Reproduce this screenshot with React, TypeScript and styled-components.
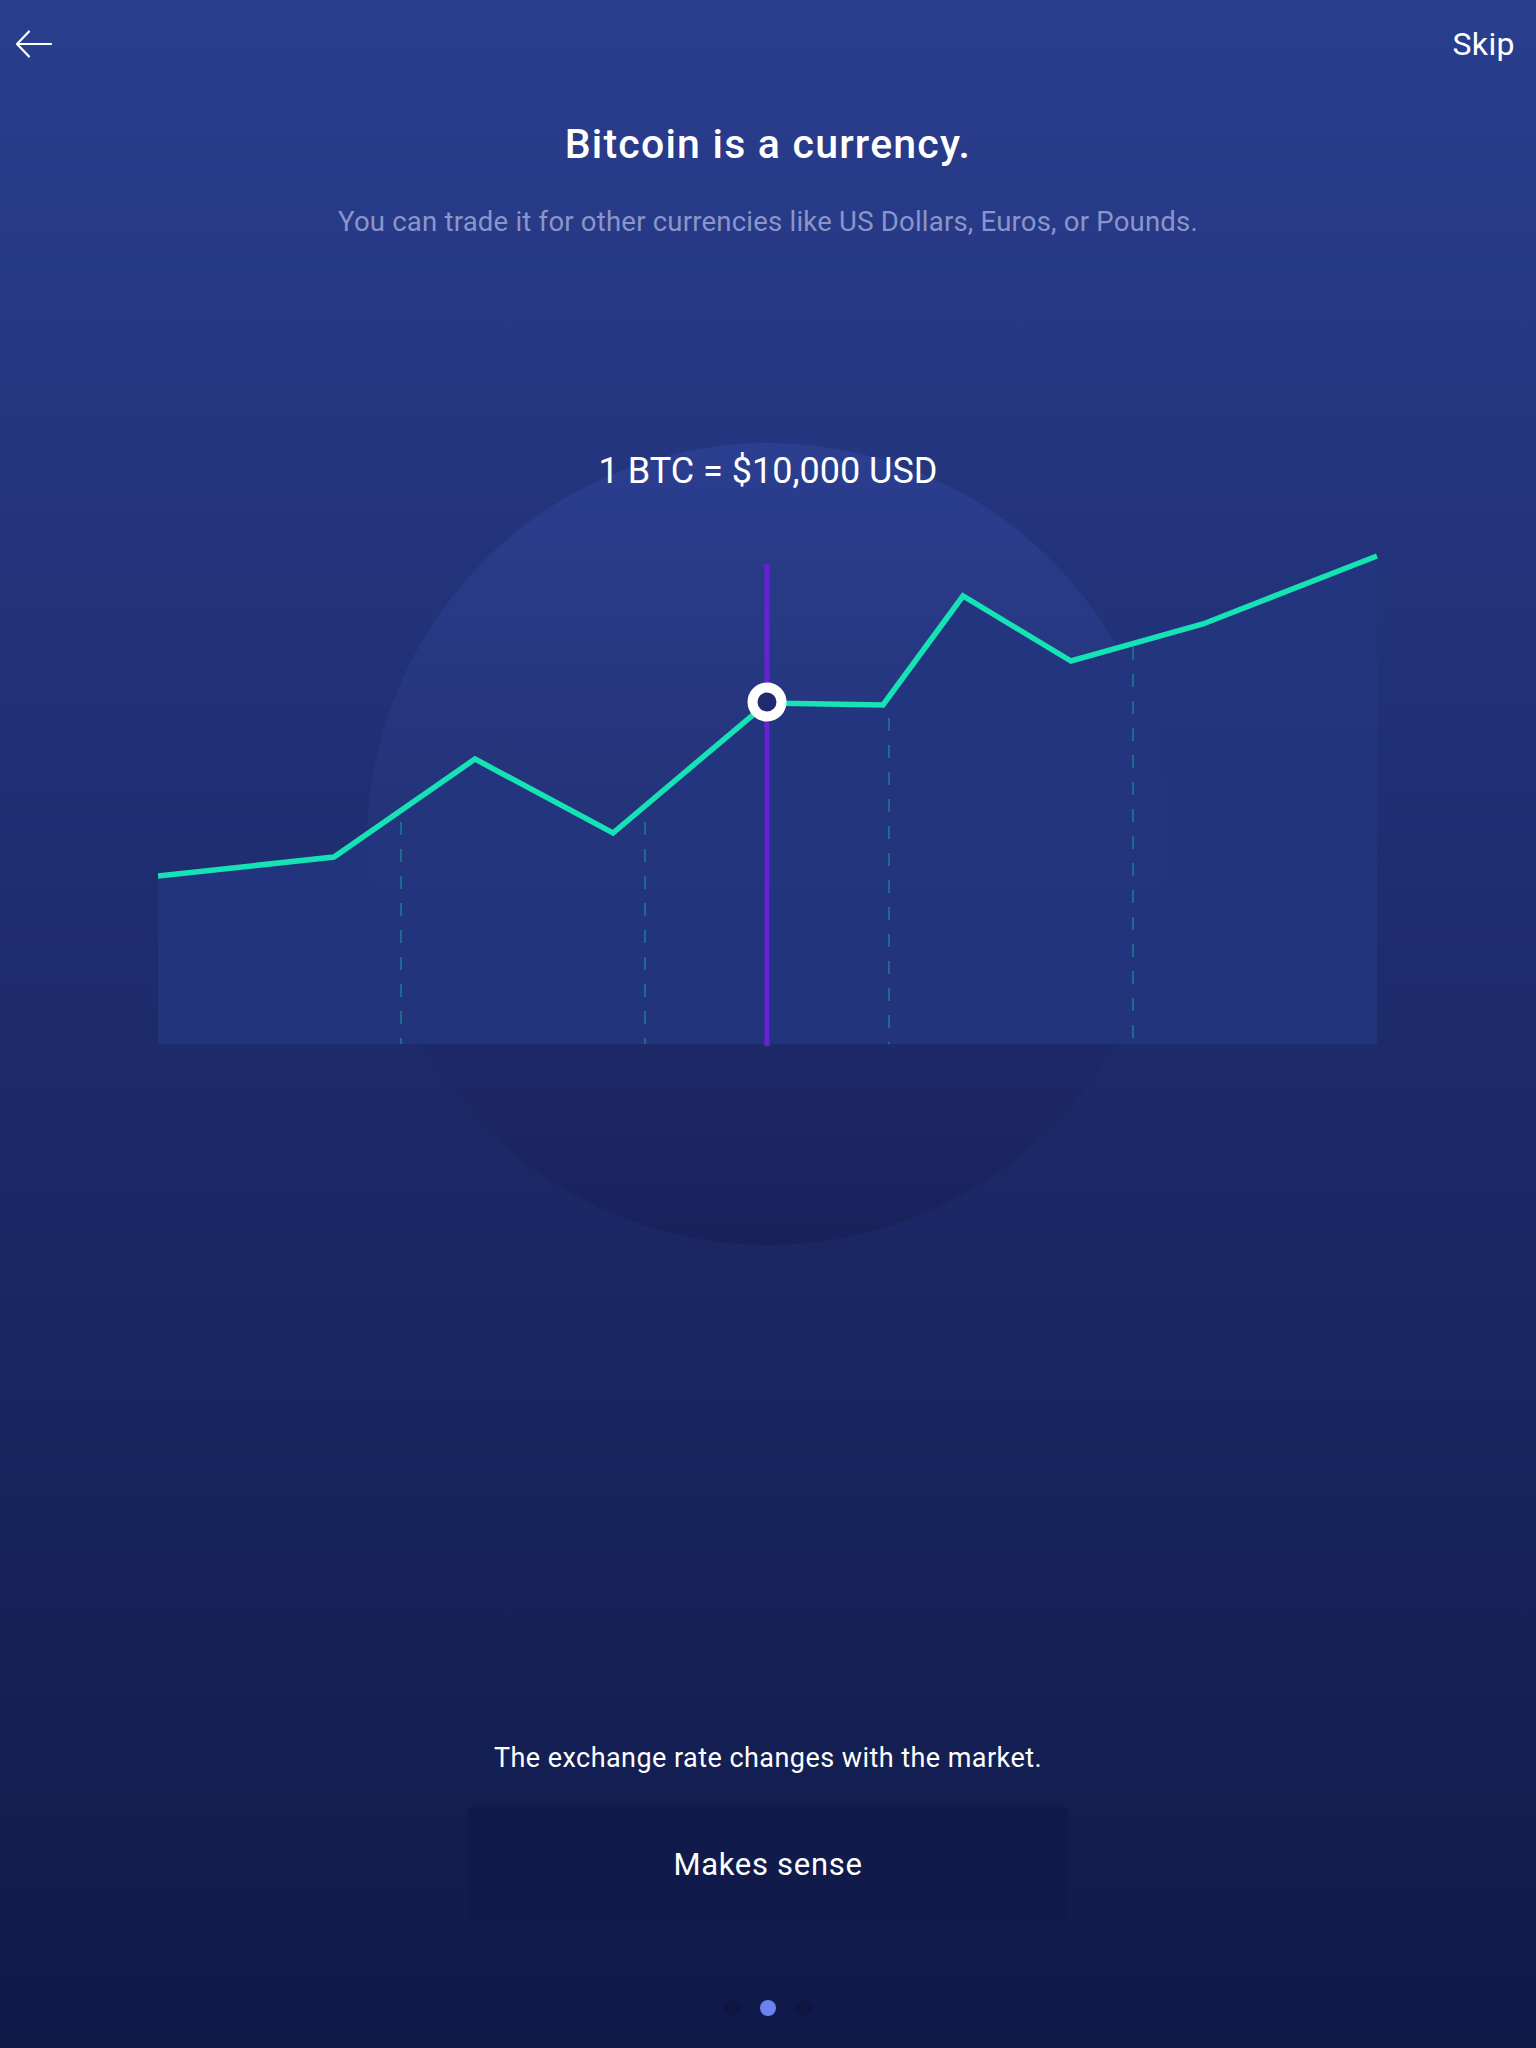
import React from "react";
import styled, { createGlobalStyle } from "styled-components";

const GlobalStyle = createGlobalStyle`
  html, body {
    margin: 0;
    padding: 0;
    background: #111a4a;
  }
  * { box-sizing: border-box; }
`;

const Page = styled.div`
  width: 1536px;
  min-height: 2048px;
  display: flex;
  flex-direction: column;
  align-items: center;
  font-family: Roboto, "Noto Sans", "Liberation Sans", sans-serif;
  color: #ffffff;
  background: linear-gradient(180deg, #2a3e8f 0%, #1d2b6b 50%, #101a49 100%);
  overflow: hidden;
`;

const TopBar = styled.header`
  width: 100%;
  height: 88px;
  display: flex;
  align-items: center;
  justify-content: space-between;
  padding: 0 21px 0 15px;
`;

const IconButton = styled.button`
  background: none;
  border: none;
  padding: 0;
  display: flex;
  align-items: center;
  cursor: pointer;
`;

const SkipLink = styled.button`
  background: none;
  border: none;
  padding: 0;
  color: #ffffff;
  font-family: inherit;
  font-size: 32px;
  line-height: 38px;
  letter-spacing: 0.4px;
  cursor: pointer;
`;

const Title = styled.h1`
  margin: 32px 0 0;
  font-size: 41px;
  line-height: 48px;
  font-weight: 500;
  letter-spacing: 1.2px;
  text-align: center;
`;

const Subtitle = styled.p`
  margin: 37px 0 0;
  font-size: 27.5px;
  line-height: 34px;
  letter-spacing: 0.22px;
  color: #8b95c9;
  text-align: center;
`;

const Stage = styled.section`
  position: relative;
  width: 100%;
  height: 860px;
  margin-top: 161px;
  display: flex;
  flex-direction: column;
  align-items: center;
`;

const Halo = styled.div`
  position: absolute;
  top: 43px;
  left: 50%;
  width: 802px;
  height: 802px;
  margin-left: -401px;
  border-radius: 50%;
  background: linear-gradient(180deg, #2b3e90 0%, #243479 45%, #18215a 100%);
  z-index: 0;
`;

const RateLabel = styled.div`
  position: relative;
  z-index: 1;
  margin-top: 49px;
  font-size: 36px;
  line-height: 44px;
  white-space: nowrap;
`;

const ChartSvg = styled.svg`
  position: relative;
  z-index: 1;
  display: block;
  margin-top: 47px;
`;

const Footer = styled.footer`
  margin-top: auto;
  display: flex;
  flex-direction: column;
  align-items: center;
  padding-bottom: 32px;
`;

const Caption = styled.p`
  margin: 0;
  font-size: 27px;
  line-height: 32px;
  letter-spacing: 0.45px;
  text-align: center;
`;

const PrimaryButton = styled.button`
  margin-top: 33px;
  width: 600px;
  height: 114px;
  border: none;
  border-radius: 5px;
  background: #111b4b;
  color: #ffffff;
  font-family: inherit;
  font-size: 31px;
  letter-spacing: 0.7px;
  cursor: pointer;
`;

const Dots = styled.div`
  margin-top: 79px;
  display: flex;
  gap: 20px;
`;

const Dot = styled.span<{ $active?: boolean }>`
  width: 16px;
  height: 16px;
  border-radius: 50%;
  background: ${(p) => (p.$active ? "#6a83ee" : "#0d1540")};
`;

const points: [number, number][] = [
  [159, 876],
  [335, 857],
  [476, 759],
  [614, 833],
  [768, 703],
  [884, 705],
  [964, 596],
  [1072, 661],
  [1204, 624],
  [1378, 556],
];

const dashLines: [number, number][] = [
  [402, 822],
  [646, 822],
  [890, 718],
  [1134, 647],
];

const BackArrow = () => (
  <svg width="38" height="30" viewBox="0 0 38 30" fill="none">
    <path
      d="M36 15H2.5M14 2.5L2 15L14 27.5"
      stroke="#ffffff"
      strokeWidth="2.2"
      strokeLinecap="round"
      strokeLinejoin="round"
    />
  </svg>
);

const Chart = () => {
  const line = points.map((p) => p.join(",")).join(" ");
  const area = `159,1044 ${line} 1378,1044`;
  return (
    <ChartSvg width="1220" height="512" viewBox="159 540 1220 512">
      <polygon points={area} fill="#23357e" fillOpacity="0.92" />
      {dashLines.map(([x, y]) => (
        <line
          key={x}
          x1={x}
          y1={y}
          x2={x}
          y2={1044}
          stroke="#1e6a8e"
          strokeWidth="2"
          strokeDasharray="13 14"
        />
      ))}
      <line x1="768" y1="564" x2="768" y2="1046" stroke="#6a1fd8" strokeWidth="5" />
      <polyline
        points={line}
        fill="none"
        stroke="#15e3b5"
        strokeWidth="5.5"
        strokeLinejoin="miter"
      />
      <circle cx="768" cy="702" r="14.5" fill="#1f2b6e" stroke="#ffffff" strokeWidth="10" />
    </ChartSvg>
  );
};

export default function App() {
  return (
    <>
      <GlobalStyle />
      <Page>
        <TopBar>
          <IconButton aria-label="Back">
            <BackArrow />
          </IconButton>
          <SkipLink>Skip</SkipLink>
        </TopBar>
        <Title>Bitcoin is a currency.</Title>
        <Subtitle>You can trade it for other currencies like US Dollars, Euros, or Pounds.</Subtitle>
        <Stage>
          <Halo />
          <RateLabel>1 BTC = $10,000 USD</RateLabel>
          <Chart />
        </Stage>
        <Footer>
          <Caption>The exchange rate changes with the market.</Caption>
          <PrimaryButton>Makes sense</PrimaryButton>
          <Dots>
            <Dot />
            <Dot $active />
            <Dot />
          </Dots>
        </Footer>
      </Page>
    </>
  );
}
